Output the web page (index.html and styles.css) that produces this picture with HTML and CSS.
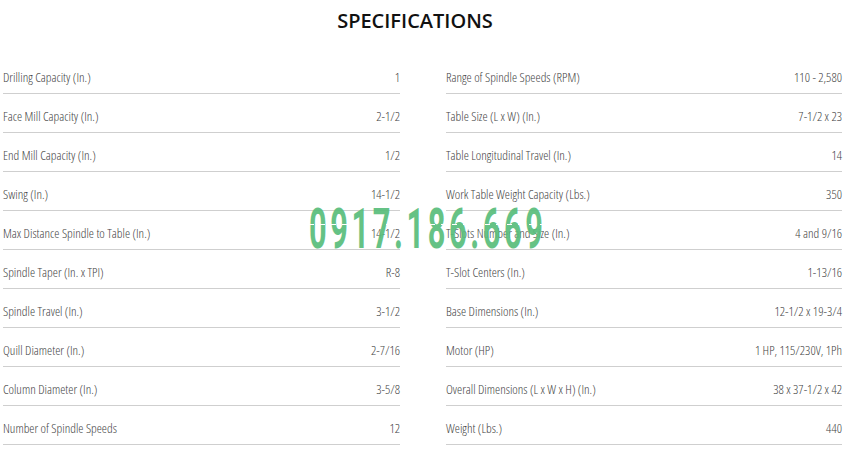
FILE: index.html
```html
<!DOCTYPE html>
<html lang="en">
<head>
<meta charset="utf-8">
<title>Specifications</title>
<link rel="stylesheet" href="styles.css">
</head>
<body>
<div class="page">
  <h2 class="title">SPECIFICATIONS</h2>
  <div class="cols">
    <div class="col">
      <div class="row"><span>Drilling Capacity (In.)</span><span>1</span></div>
      <div class="row"><span>Face Mill Capacity (In.)</span><span>2-1/2</span></div>
      <div class="row"><span>End Mill Capacity (In.)</span><span>1/2</span></div>
      <div class="row"><span>Swing (In.)</span><span>14-1/2</span></div>
      <div class="row"><span>Max Distance Spindle to Table (In.)</span><span>14-1/2</span></div>
      <div class="row"><span>Spindle Taper (In. x TPI)</span><span>R-8</span></div>
      <div class="row"><span>Spindle Travel (In.)</span><span>3-1/2</span></div>
      <div class="row"><span>Quill Diameter (In.)</span><span>2-7/16</span></div>
      <div class="row"><span>Column Diameter (In.)</span><span>3-5/8</span></div>
      <div class="row"><span>Number of Spindle Speeds</span><span>12</span></div>
    </div>
    <div class="col">
      <div class="row"><span>Range of Spindle Speeds (RPM)</span><span>110 - 2,580</span></div>
      <div class="row"><span>Table Size (L x W) (In.)</span><span>7-1/2 x 23</span></div>
      <div class="row"><span>Table Longitudinal Travel (In.)</span><span>14</span></div>
      <div class="row"><span>Work Table Weight Capacity (Lbs.)</span><span>350</span></div>
      <div class="row"><span>T-Slots Number and Size (In.)</span><span>4 and 9/16</span></div>
      <div class="row"><span>T-Slot Centers (In.)</span><span>1-13/16</span></div>
      <div class="row"><span>Base Dimensions (In.)</span><span>12-1/2 x 19-3/4</span></div>
      <div class="row"><span>Motor (HP)</span><span>1 HP, 115/230V, 1Ph</span></div>
      <div class="row"><span>Overall Dimensions (L x W x H) (In.)</span><span>38 x 37-1/2 x 42</span></div>
      <div class="row"><span>Weight (Lbs.)</span><span>440</span></div>
    </div>
  </div>
  <div class="watermark"><span class="wm-text">0917.186.669</span></div>
</div>
</body>
</html>
```

FILE: styles.css
```css
* { box-sizing: border-box; }
html, body { margin: 0; padding: 0; background: #fff; }
body {
  font-family: "Open Sans", "Liberation Sans", sans-serif;
  color: #555;
}
.page {
  position: relative;
  width: 850px;
  height: 450px;
  overflow: hidden;
}
.title {
  margin: 0 0 13px;
  height: 42px;
  line-height: 42px;
  padding-right: 20px;
  text-align: center;
  font-size: 20px;
  font-weight: 600;
  color: #111;
  letter-spacing: 0;
}
.cols {
  display: grid;
  grid-template-columns: 397px 396px;
  column-gap: 46px;
  padding-left: 3px;
}
.row {
  display: flex;
  justify-content: space-between;
  padding: 14px 0 8px;
  line-height: 16px;
  height: 39px;
  border-bottom: 1px solid #cfcfcf;
  font-size: 13px;
  font-weight: 300;
  font-stretch: 80%;
  color: #444;
}
.watermark {
  position: absolute;
  left: 309px;
  top: 194px;
  width: 240px;
  height: 70px;
  opacity: 0.92;
}
.wm-text {
  display: block;
  font-family: Roboto, "Liberation Sans", sans-serif;
  font-weight: 700;
  font-size: 56px;
  line-height: 70px;
  letter-spacing: 6.5px;
  color: #58bd7b;
  white-space: nowrap;
  transform: scaleX(0.55);
  transform-origin: 0 0;
}
.watermark::after {
  content: "";
  position: absolute;
  left: 0;
  right: 0;
  top: 30px;
  height: 1px;
  background: repeating-linear-gradient(90deg, #fff 0 5px, transparent 5px 11px);
}
```
